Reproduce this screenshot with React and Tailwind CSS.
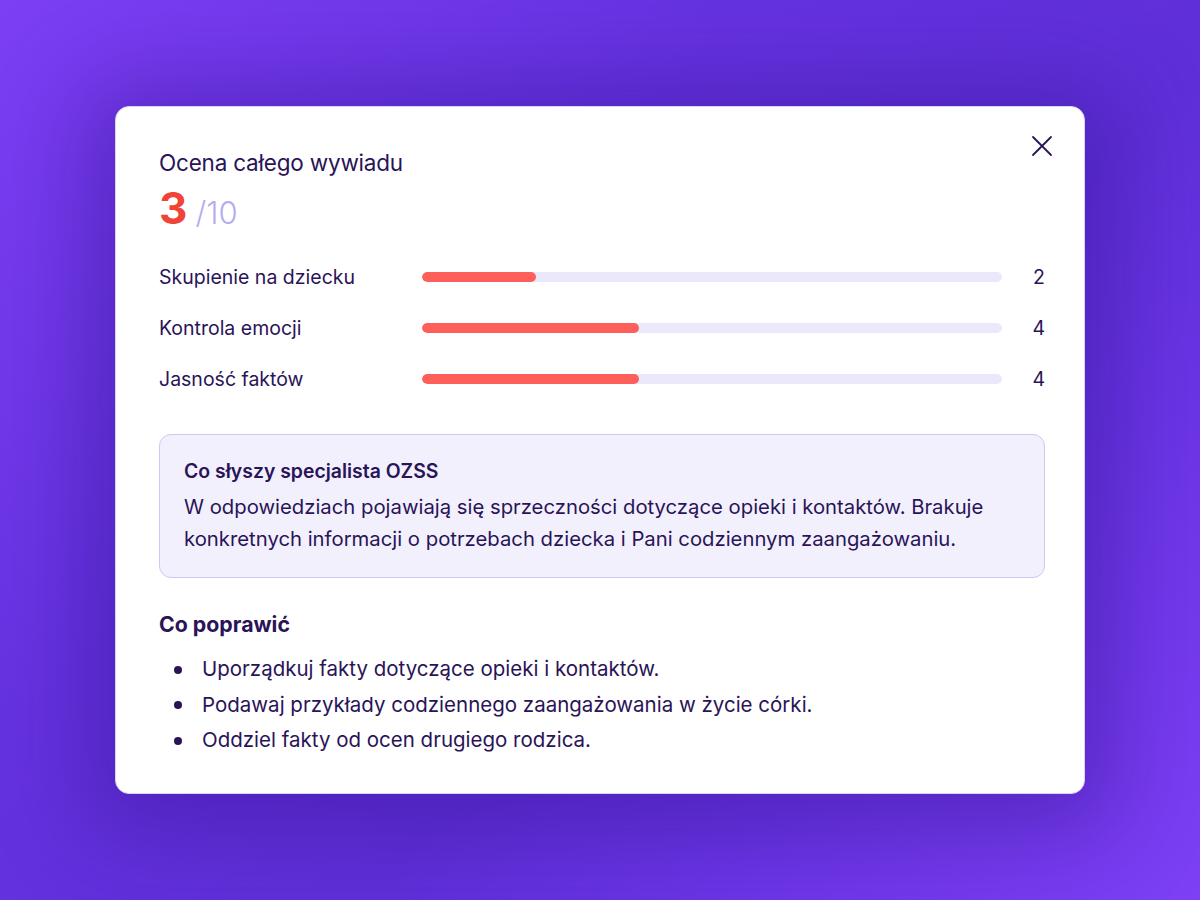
import React from "react";

const rows = [
  { label: "Skupienie na dziecku", value: 2, pct: 19.7 },
  { label: "Kontrola emocji", value: 4, pct: 37.4 },
  { label: "Jasność faktów", value: 4, pct: 37.4 },
];

const tips = [
  "Uporządkuj fakty dotyczące opieki i kontaktów.",
  "Podawaj przykłady codziennego zaangażowania w życie córki.",
  "Oddziel fakty od ocen drugiego rodzica.",
];

export default function App() {
  return (
    <div
      className="w-full h-[900px] flex items-center justify-center bg-[linear-gradient(135deg,#7c3ff4_0%,#6632e0_35%,#5f2fd8_60%,#6a34e4_75%,#7d40f5_100%)] text-[#2a1458]"
      style={{ fontFamily: "Inter, 'Noto Sans', sans-serif" }}
    >
      <div className="relative w-[970px] h-[688px] bg-white rounded-[14px] border border-[#d9d2f7] shadow-[0_10px_90px_30px_rgba(55,20,150,0.45)] pl-[43px] pr-[39px] pt-[42px]">
        <button className="absolute top-[28px] right-[31px] w-[22px] h-[22px] flex items-center justify-center">
          <svg width="22" height="22" viewBox="0 0 22 22" fill="none" stroke="#2a1458" strokeWidth="1.8" strokeLinecap="round">
            <path d="M2 2 L20 20 M20 2 L2 20" />
          </svg>
        </button>

        <div className="text-[22.5px] leading-[28px] tracking-[-0.2px]">Ocena całego wywiadu</div>
        <div className="flex items-baseline mt-[8px] h-[46px]">
          <span className="text-[44px] leading-[46px] font-bold text-[#f04438]">3</span>
          <span className="text-[31px] leading-[46px] text-[#b3acf1] ml-[8px] font-light">/10</span>
        </div>

        <div className="mt-[32px] flex flex-col gap-[23px]">
          {rows.map((r) => (
            <div key={r.label} className="flex items-center h-[28px]">
              <div className="w-[263px] text-[19.5px] leading-[28px]">{r.label}</div>
              <div className="w-[580px] h-[10px] rounded-full bg-[#ebe8fb] overflow-hidden">
                <div className="h-full rounded-full bg-[#ff5f5a]" style={{ width: `${r.pct}%` }} />
              </div>
              <div className="flex-1 text-right text-[19.5px] leading-[28px]">{r.value}</div>
            </div>
          ))}
        </div>

        <div className="mt-[41px] rounded-[12px] bg-[#f2f0fd] border border-[#cfc8f4] px-[24px] pt-[22px] pb-[22px]">
          <div className="text-[19.4px] leading-[28px] font-semibold">Co słyszy specjalista OZSS</div>
          <p className="mt-[6px] text-[20.3px] leading-[32px]">
            W odpowiedziach pojawiają się sprzeczności dotyczące opieki i kontaktów. Brakuje konkretnych informacji o potrzebach dziecka i Pani codziennym zaangażowaniu.
          </p>
        </div>

        <div className="mt-[32px] text-[21.3px] leading-[28px] font-bold">Co poprawić</div>
        <ul className="mt-[14px] flex flex-col">
          {tips.map((t) => (
            <li key={t} className="flex items-center h-[35.5px] text-[20.5px]">
              <span className="w-[8px] h-[8px] rounded-full bg-[#2a1458] ml-[15px] mr-[20px]" />
              <span>{t}</span>
            </li>
          ))}
        </ul>
      </div>
    </div>
  );
}
